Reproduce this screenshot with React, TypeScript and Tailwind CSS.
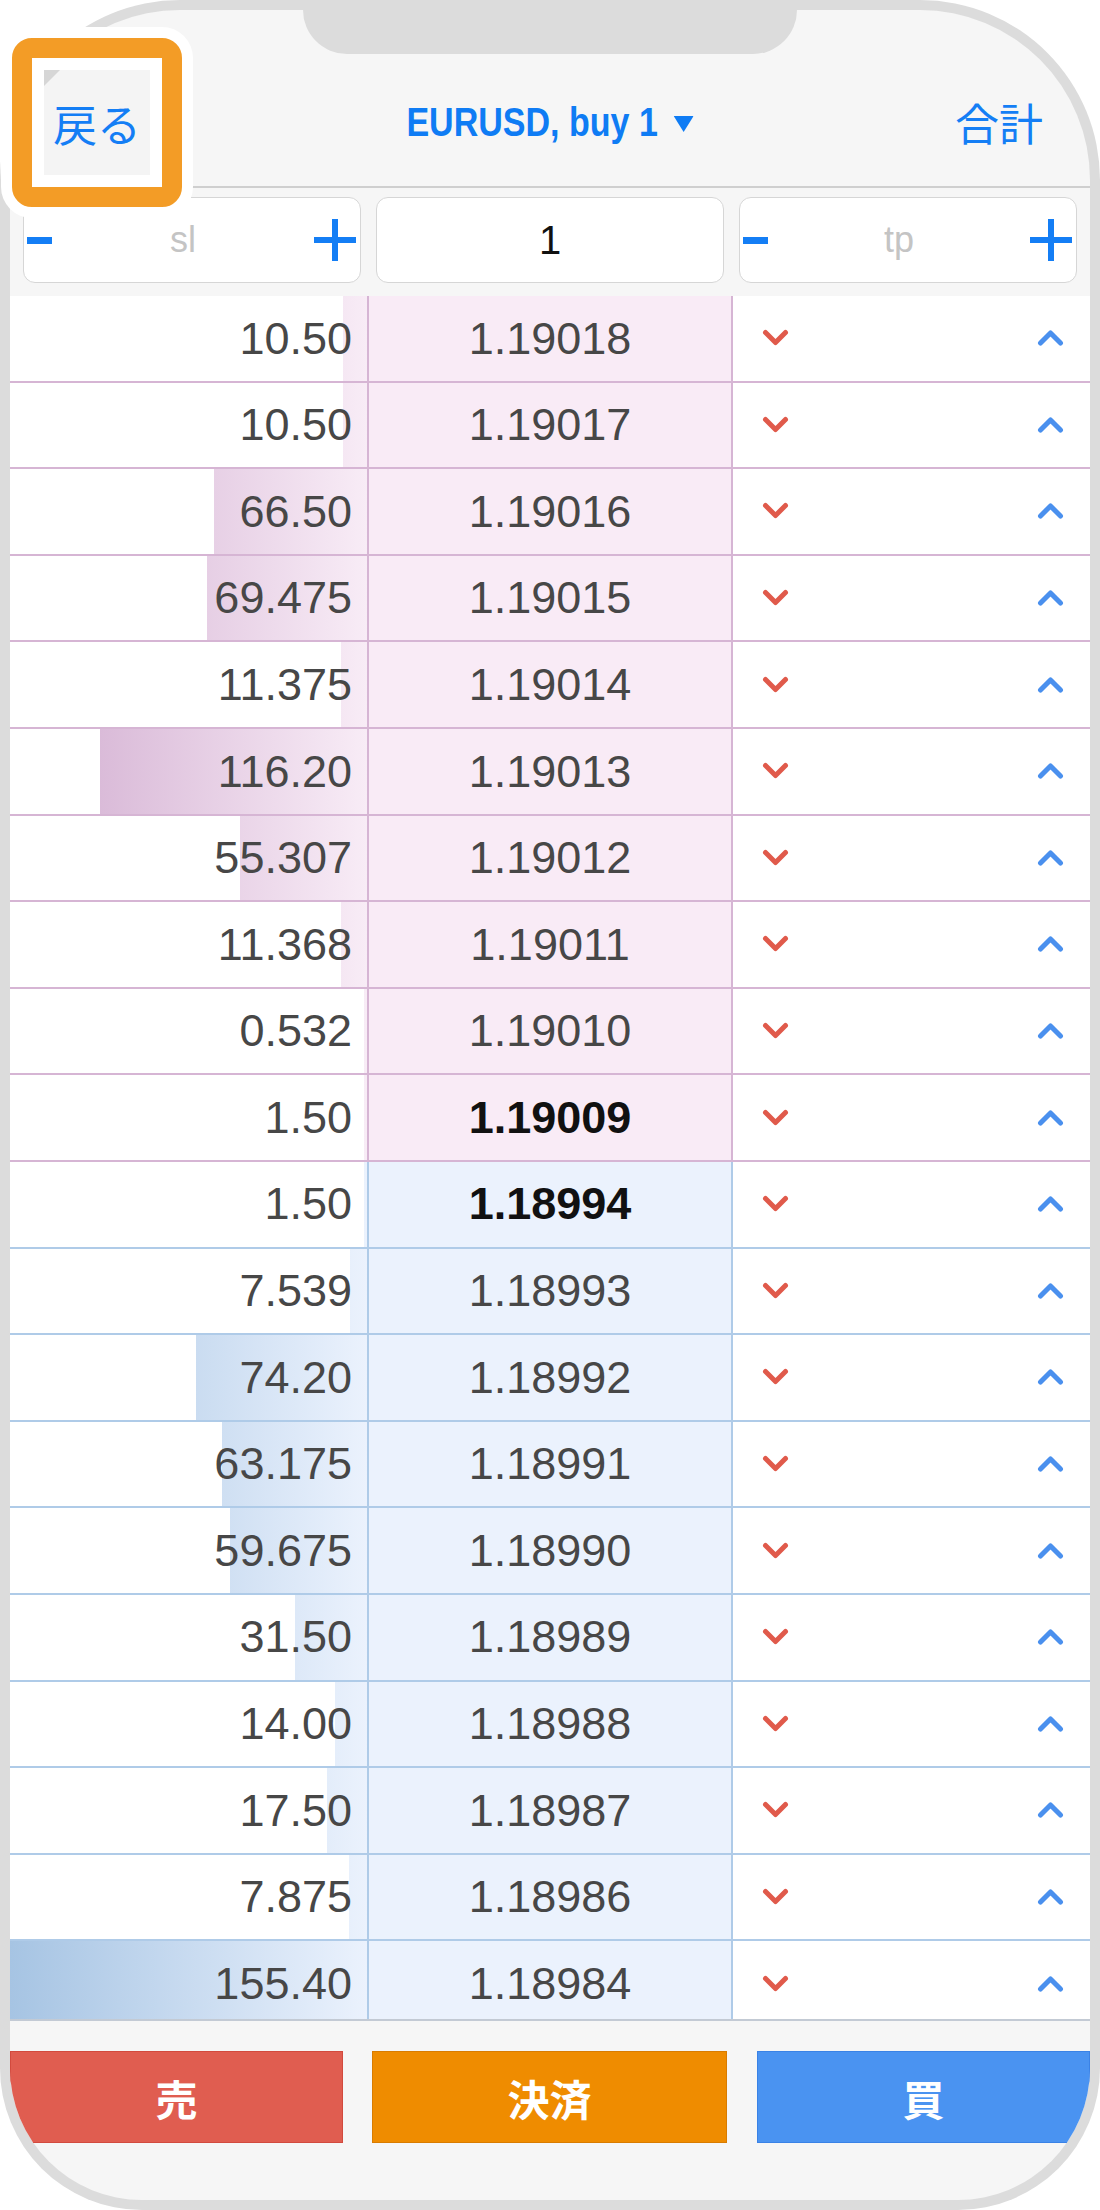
import React from "react";

type Row = { v: string; p: string; ask: boolean; bold?: boolean };

const rows: Row[] = [
  { v: "10.50", p: "1.19018", ask: true },
  { v: "10.50", p: "1.19017", ask: true },
  { v: "66.50", p: "1.19016", ask: true },
  { v: "69.475", p: "1.19015", ask: true },
  { v: "11.375", p: "1.19014", ask: true },
  { v: "116.20", p: "1.19013", ask: true },
  { v: "55.307", p: "1.19012", ask: true },
  { v: "11.368", p: "1.19011", ask: true },
  { v: "0.532", p: "1.19010", ask: true },
  { v: "1.50", p: "1.19009", ask: true, bold: true },
  { v: "1.50", p: "1.18994", ask: false, bold: true },
  { v: "7.539", p: "1.18993", ask: false },
  { v: "74.20", p: "1.18992", ask: false },
  { v: "63.175", p: "1.18991", ask: false },
  { v: "59.675", p: "1.18990", ask: false },
  { v: "31.50", p: "1.18989", ask: false },
  { v: "14.00", p: "1.18988", ask: false },
  { v: "17.50", p: "1.18987", ask: false },
  { v: "7.875", p: "1.18986", ask: false },
  { v: "155.40", p: "1.18984", ask: false },
];

const ChevDown = () => (
  <svg width="27" height="18" viewBox="0 0 27 18">
    <polyline points="3.5,3.5 13.5,13.5 23.5,3.5" fill="none" stroke="#e05a4b" strokeWidth="5" strokeLinecap="round" strokeLinejoin="round" />
  </svg>
);
const ChevUp = () => (
  <svg width="27" height="18" viewBox="0 0 27 18">
    <polyline points="3.5,14 13.5,4 23.5,14" fill="none" stroke="#4a90ee" strokeWidth="5" strokeLinecap="round" strokeLinejoin="round" />
  </svg>
);

const Minus = () => (
  <svg width="25" height="7" viewBox="0 0 25 7">
    <rect x="0" y="0" width="25" height="7" fill="#147ef5" />
  </svg>
);
const Plus = () => (
  <svg width="42" height="42" viewBox="0 0 42 42">
    <rect x="0" y="18" width="42" height="6" fill="#147ef5" />
    <rect x="18" y="0" width="6" height="42" fill="#147ef5" />
  </svg>
);

function BookRow({ r }: { r: Row }) {
  const w = Math.min(357, Math.max(3, parseFloat(r.v) * 2.3));
  return (
    <div
      className={`flex h-[86.6px] shrink-0 border-b-2 ${
        r.ask ? "border-[#d6b5d4]" : "border-[#afcbe8]"
      }`}
    >
      <div
        className={`grid w-[359px] border-r-2 ${
          r.ask
            ? "border-[#d6b5d4] bg-linear-to-r from-[#d0abcf] to-[#f8ecf6]"
            : "border-[#afcbe8] bg-linear-to-r from-[#a6c4e3] to-[#ebf2fd]"
        }`}
      >
        <div className="col-start-1 row-start-1 h-full bg-white" style={{ width: `${357 - w}px` }} />
        <div className="col-start-1 row-start-1 flex items-center justify-end pr-[15px] text-[45px] text-[#474747] font-['Liberation_Sans',Arial,sans-serif]">
          {r.v}
        </div>
      </div>
      <div
        className={`flex w-[364px] items-center justify-center border-r-2 text-[45px] font-['Liberation_Sans',Arial,sans-serif] ${
          r.ask ? "border-[#d6b5d4] bg-[#f9ebf6]" : "border-[#afcbe8] bg-[#ebf2fd]"
        } ${r.bold ? "font-bold text-[#111111]" : "text-[#474747]"}`}
      >
        {r.p}
      </div>
      <div className="flex flex-1 items-center justify-between bg-white pl-[29px] pr-[26px]">
        <ChevDown />
        <ChevUp />
      </div>
    </div>
  );
}

export default function App() {
  return (
    <div className="relative h-[2210px] w-[1100px] bg-white">
      <div className="h-full rounded-t-[180px] rounded-b-[142px] bg-[#dcdcdc] p-[10px]">
        <div className="relative flex h-full flex-col overflow-hidden rounded-t-[170px] rounded-b-[132px] bg-[#f6f6f6]">
          {/* notch */}
          <div className="absolute left-[293px] top-0 h-[44px] w-[494px] rounded-b-[44px] bg-[#dcdcdc]" />

          {/* header */}
          <div className="grid h-[178px] shrink-0 grid-cols-[1fr_auto_1fr] items-center border-b-2 border-[#cfcfcf] px-[47px] pt-[48px]">
            <div className="text-[44px] text-[#147ef5] font-['Noto_Sans_CJK_JP',sans-serif] leading-none">戻る</div>
            <div className="flex scale-x-[0.83] items-center text-[41px] font-bold text-[#0f7cf4] font-['Liberation_Sans',Arial,sans-serif] leading-none">
              <span>EURUSD, buy 1</span>
              <svg width="24" height="16" viewBox="0 0 24 16" className="ml-[19px] mt-[4px]">
                <polygon points="0,0 24,0 12,16" fill="#0f7cf4" />
              </svg>
            </div>
            <div className="text-right text-[44px] text-[#147ef5] font-['Noto_Sans_CJK_JP',sans-serif] leading-none">合計</div>
          </div>

          {/* sl / lot / tp */}
          <div className="flex h-[108px] shrink-0 gap-[15px] px-[13px] pt-[9px] font-['Liberation_Sans',Arial,sans-serif]">
            <div className="flex h-[86px] w-[338px] items-center justify-between rounded-[12px] border border-[#d6d6d6] bg-white pl-[3px] pr-[4px]">
              <Minus />
              <span className="text-[36px] text-[#c4c4c4]">sl</span>
              <Plus />
            </div>
            <div className="flex h-[86px] w-[348px] items-center justify-center rounded-[12px] border border-[#d6d6d6] bg-white">
              <span className="text-[40px] text-[#111111]">1</span>
            </div>
            <div className="flex h-[86px] w-[338px] items-center justify-between rounded-[12px] border border-[#d6d6d6] bg-white pl-[3px] pr-[4px]">
              <Minus />
              <span className="text-[36px] text-[#c4c4c4]">tp</span>
              <Plus />
            </div>
          </div>

          {/* order book */}
          <div className="flex h-[1723px] shrink-0 flex-col overflow-hidden">
            {rows.map((r, i) => (
              <BookRow key={i} r={r} />
            ))}
          </div>

          {/* buttons */}
          <div className="flex flex-1 gap-[29px] border-t-2 border-[#c3cad4] pt-[30px] font-['Noto_Sans_CJK_JP',sans-serif]">
            <div className="flex h-[92px] w-[333px] items-center justify-center border border-[#d24a3e] bg-[#e05d50] text-[42px] font-bold text-white">
              売
            </div>
            <div className="flex h-[92px] w-[355px] items-center justify-center border border-[#d97c00] bg-[#ef8c00] text-[42px] font-bold text-white">
              決済
            </div>
            <div className="ml-[1px] flex h-[92px] w-[333px] items-center justify-center border border-[#3a82e6] bg-[#4a93f1] text-[42px] font-bold text-white">
              買
            </div>
          </div>
        </div>
      </div>

      {/* highlight callout over the back button */}
      <div className="absolute left-[12px] top-[38px] h-[169px] w-[170px] rounded-[20px] border-[20px] border-[#f39c26] bg-white p-[12px] ring-[11px] ring-white">
        <div className="relative flex h-full w-full items-center justify-center bg-[#f4f4f4]">
          <div className="absolute left-0 top-0 h-0 w-0 border-l-[8px] border-t-[8px] border-l-[#d6d6d6] border-t-[#d6d6d6] border-r-[8px] border-b-[8px] border-r-transparent border-b-transparent" />
          <span className="text-[44px] text-[#147ef5] font-['Noto_Sans_CJK_JP',sans-serif] leading-none">戻る</span>
        </div>
      </div>
    </div>
  );
}
